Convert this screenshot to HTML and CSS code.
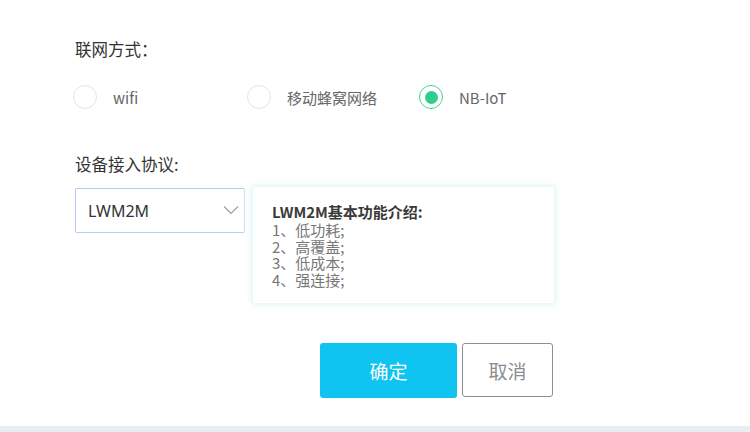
FILE: index.html
```html
<!DOCTYPE html>
<html lang="zh">
<head>
<meta charset="utf-8">
<link rel="stylesheet" href="styles.css">
</head>
<body>
<div class="page">
  <div class="form">
    <div class="field-label">联网方式<span class="fw-colon">：</span></div>
    <div class="radio-group">
      <label class="radio"><span class="radio-dot"></span><span class="radio-text">wifi</span></label>
      <label class="radio"><span class="radio-dot"></span><span class="radio-text">移动蜂窝网络</span></label>
      <label class="radio checked"><span class="radio-dot"></span><span class="radio-text">NB-IoT</span></label>
    </div>
    <div class="field-label second">设备接入协议:</div>
    <div class="protocol-row">
      <div class="select">
        <span class="select-value">LWM2M</span>
        <svg class="chevron" width="16" height="10" viewBox="0 0 16 10"><path d="M1 1.5 L8 8.5 L15 1.5" fill="none" stroke="#9a9da3" stroke-width="1.1"/></svg>
      </div>
      <div class="info">
        <div class="info-title">LWM2M基本功能介绍:</div>
        <div class="info-line">1、低功耗;</div>
        <div class="info-line">2、高覆盖;</div>
        <div class="info-line">3、低成本;</div>
        <div class="info-line">4、强连接;</div>
      </div>
    </div>
    <div class="actions">
      <button class="btn btn-primary">确定</button>
      <button class="btn btn-cancel">取消</button>
    </div>
  </div>
  <div class="footer-strip"></div>
</div>
</body>
</html>
```
FILE: styles.css
```css
html, body {
  margin: 0;
  padding: 0;
  background: #ffffff;
  font-family: "Noto Sans", "Noto Sans CJK SC", sans-serif;
}
.page {
  width: 750px;
  height: 432px;
  display: flex;
  flex-direction: column;
  overflow: hidden;
}
.form {
  flex: 1;
  padding: 38px 0 0 75px;
}
.field-label {
  font-size: 16.5px;
  line-height: 22px;
  color: #333333;
  font-family: "Noto Sans CJK SC", sans-serif;
}
.fw-colon {
  font-family: "Noto Sans CJK TC", sans-serif;
}
.field-label.second {
  margin-top: 44px;
}
.radio-group {
  display: grid;
  grid-template-columns: 174px 172px auto;
  margin: 25px 0 0 -2px;
  height: 24px;
  align-items: center;
}
.radio {
  display: flex;
  align-items: center;
  gap: 16px;
}
.radio-dot {
  width: 22px;
  height: 22px;
  border: 1px solid #e1e3e6;
  border-radius: 50%;
  display: flex;
  align-items: center;
  justify-content: center;
  box-sizing: content-box;
}
.radio.checked .radio-dot {
  border-color: #3fd59a;
}
.radio.checked .radio-dot::after {
  content: "";
  width: 13px;
  height: 13px;
  border-radius: 50%;
  background: #2ecf8c;
}
.radio-text {
  font-size: 15px;
  color: #666666;
  font-family: "Noto Sans CJK SC", sans-serif;
}
.protocol-row {
  display: flex;
  align-items: flex-start;
  margin-top: 12px;
}
.select {
  box-sizing: border-box;
  width: 170px;
  height: 45px;
  border: 1px solid #d6dde8;
  border-top-color: #b3cdf5;
  border-left-color: #b3cdf5;
  border-bottom-color: #b9cff0;
  border-radius: 2px;
  display: flex;
  align-items: center;
  justify-content: space-between;
  padding: 0 5px 0 12px;
  margin-top: 1px;
}
.select-value {
  font-size: 16px;
  color: #333333;
}
.chevron {
  margin-bottom: 2px;
}
.info {
  box-sizing: border-box;
  margin-left: 8px;
  width: 301px;
  height: 116px;
  padding: 15px 0 0 19px;
  background: #ffffff;
  box-shadow: 0 0 6px 1px rgba(170, 238, 225, 0.5);
}
.info-title {
  font-size: 15px;
  font-weight: bold;
  color: #3a3a3a;
  line-height: 20px;
  font-family: "Noto Sans CJK SC", sans-serif;
}
.info-line {
  font-size: 15px;
  line-height: 16.5px;
  color: #777777;
  font-family: "Noto Sans CJK SC", sans-serif;
}
.actions {
  display: flex;
  gap: 5px;
  margin: 40px 0 0 245px;
  align-items: flex-start;
}
.btn {
  font-family: "Noto Sans CJK SC", sans-serif;
  font-size: 19px;
  border-radius: 3px;
  padding: 0;
  cursor: pointer;
}
.btn-primary {
  width: 137px;
  height: 55px;
  background: #0fc4f1;
  color: #ffffff;
  border: none;
}
.btn-cancel {
  width: 91px;
  height: 54px;
  background: #ffffff;
  color: #8a8c92;
  border: 1px solid #8c8f99;
}
.footer-strip {
  height: 6px;
  background: #e9eef2;
}
```
